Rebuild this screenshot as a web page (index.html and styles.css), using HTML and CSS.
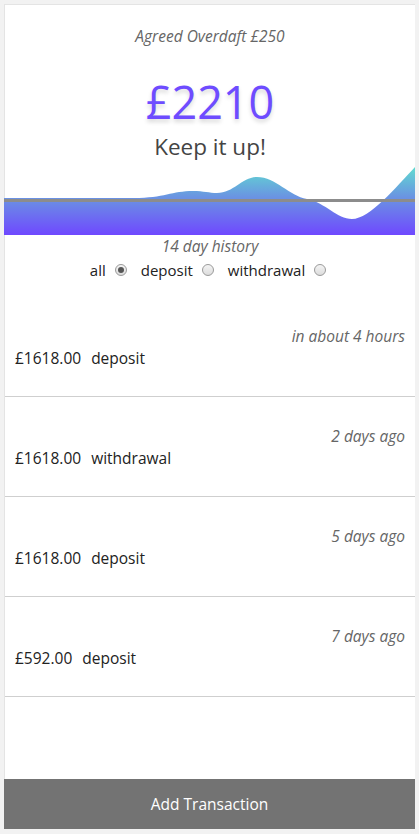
FILE: index.html
```html
<!DOCTYPE html>
<html>
<head>
<meta charset="utf-8">
<link rel="stylesheet" href="styles.css">
</head>
<body>
<div class="card">
  <div class="overdraft">Agreed Overdaft £250</div>
  <div class="balance">£2210</div>
  <div class="cheer">Keep it up!</div>
  <svg class="chart" width="411" height="70" viewBox="0 0 411 70">
    <defs>
      <linearGradient id="g" x1="0" y1="0" x2="0" y2="70" gradientUnits="userSpaceOnUse">
        <stop offset="0" stop-color="#5fe0cf"/>
        <stop offset="0.45" stop-color="#6a95e2"/>
        <stop offset="1" stop-color="#6f48ff"/>
      </linearGradient>
    </defs>
    <path d="M0,33 L130,33 C160,33 168,26 189,26 C200,26 205,28 213,28 C230,28 238,12 253,12 C272,12 285,31 303,34 C322,38 333,54 348,54 C366,54 392,22 411,2 L411,70 L0,70 Z" fill="url(#g)"/>
    <rect x="0" y="34" width="411" height="3" fill="#8c8c8c"/>
  </svg>
  <div class="history">14 day history</div>
  <div class="filters">
    <label class="opt">all <input type="radio" name="f" checked></label>
    <label class="opt">deposit <input type="radio" name="f"></label>
    <label class="opt">withdrawal <input type="radio" name="f"></label>
  </div>
  <ul class="list">
    <li class="row">
      <div class="when">in about 4 hours</div>
      <div class="what"><span class="amt">£1618.00</span><span>deposit</span></div>
    </li>
    <li class="row">
      <div class="when">2 days ago</div>
      <div class="what"><span class="amt">£1618.00</span><span>withdrawal</span></div>
    </li>
    <li class="row">
      <div class="when">5 days ago</div>
      <div class="what"><span class="amt">£1618.00</span><span>deposit</span></div>
    </li>
    <li class="row">
      <div class="when">7 days ago</div>
      <div class="what"><span class="amt">£592.00</span><span>deposit</span></div>
    </li>
  </ul>
  <button class="add">Add Transaction</button>
</div>
</body>
</html>
```
FILE: styles.css
```css
html, body {
  margin: 0;
  padding: 0;
}
body {
  background: #f2f2f2;
  padding: 4px;
  font-family: "Open Sans", "Noto Sans", sans-serif;
  color: #222;
}
.card {
  background: #fff;
  height: 825px;
  border-top: 1px solid #e4e4e4;
  border-left: 1px solid #e4e4e4;
  box-sizing: border-box;
  display: flex;
  flex-direction: column;
  width: 411px;
}
.overdraft {
  margin-top: 20px;
  text-align: center;
  font-style: italic;
  font-size: 15.5px;
  line-height: 22px;
  color: #666;
}
.balance {
  margin-top: 29px;
  text-align: center;
  color: #6e4cff;
  font-size: 45px;
  line-height: 52px;
  text-shadow: 0 3px 4px rgba(0,0,0,0.15);
}
.cheer {
  text-align: center;
  font-size: 22.5px;
  line-height: 30px;
  color: #444;
  margin-top: 4px;
}
.chart {
  display: block;
  margin-top: 3px;
  margin-left: -1px;
}
.history {
  text-align: center;
  font-style: italic;
  font-size: 15.5px;
  line-height: 22px;
  color: #666;
}
.filters {
  display: flex;
  justify-content: center;
  gap: 14px;
  font-size: 15px;
  line-height: 26px;
  color: #222;
  padding-right: 4px;
}
.opt {
  display: flex;
  align-items: center;
  gap: 9px;
}
.opt input {
  appearance: none;
  -webkit-appearance: none;
  margin: 0;
  width: 12px;
  height: 12px;
  border-radius: 50%;
  border: 1px solid #9a9a9a;
  background: linear-gradient(#f4f4f4, #dcdcdc);
  box-sizing: border-box;
  position: relative;
}
.opt input:checked::after {
  content: "";
  position: absolute;
  left: 2px;
  top: 2px;
  width: 6px;
  height: 6px;
  border-radius: 50%;
  background: #555;
}
.list {
  list-style: none;
  margin: 14px 0 0;
  padding: 0;
}
.row {
  height: 100px;
  box-sizing: border-box;
  border-bottom: 1px solid #cfcfcf;
  padding: 29px 10px 0 10px;
}
.when {
  text-align: right;
  font-style: italic;
  font-size: 15.5px;
  line-height: 21px;
  color: #666;
}
.what {
  font-size: 15.5px;
  line-height: 22px;
  color: #222;
  display: flex;
  gap: 10px;
}
.add {
  margin-top: auto;
  height: 50px;
  border: none;
  background: #737373;
  color: #fff;
  font-family: inherit;
  font-size: 15.5px;
  margin-left: -1px;
  width: 411px;
}
```
